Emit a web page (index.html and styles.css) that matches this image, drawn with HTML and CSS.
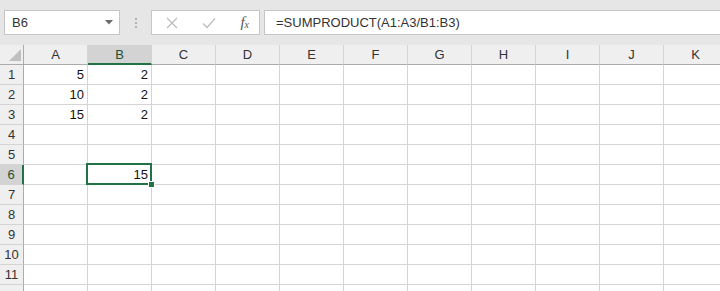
FILE: index.html
```html
<!DOCTYPE html>
<html lang="en">
<head>
    <meta charset="UTF-8">
    <title>SUMPRODUCT</title>
    <link rel="stylesheet" href="styles.css">
</head>
<body>
    <div class="toolbar">
        <div class="name-box">
            <span>B6</span>
            <svg class="caret" width="8" height="5" viewBox="0 0 8 5"><path d="M0 0H8L4 4.5Z" fill="#6b6b6b"/></svg>
        </div>
        <div class="grip">
            <i></i><i></i><i></i>
        </div>
        <div class="fn-buttons">
            <svg width="12" height="12" viewBox="0 0 12 12"><path d="M1 1L11 11M11 1L1 11" stroke="#bdbdbd" stroke-width="1.3" fill="none"/></svg>
            <svg width="14" height="12" viewBox="0 0 14 12"><path d="M1 6.5L5 10.5L13 1.5" stroke="#bdbdbd" stroke-width="1.3" fill="none"/></svg>
            <span class="fx">f<sub>x</sub></span>
        </div>
        <div class="formula">=SUMPRODUCT(A1:A3/B1:B3)</div>
    </div>

    <div class="sheet">
        <div class="corner"><svg width="12" height="12" viewBox="0 0 12 12"><path d="M12 0V12H0Z" fill="#bfbfbf"/></svg></div>
        <div class="col-head">A</div>
        <div class="col-head active">B</div>
        <div class="col-head">C</div>
        <div class="col-head">D</div>
        <div class="col-head">E</div>
        <div class="col-head">F</div>
        <div class="col-head">G</div>
        <div class="col-head">H</div>
        <div class="col-head">I</div>
        <div class="col-head">J</div>
        <div class="col-head">K</div>

        <div class="row-head">1</div><div class="cell">5</div><div class="cell">2</div><div class="cell"></div><div class="cell"></div><div class="cell"></div><div class="cell"></div><div class="cell"></div><div class="cell"></div><div class="cell"></div><div class="cell"></div><div class="cell"></div>
        <div class="row-head">2</div><div class="cell">10</div><div class="cell">2</div><div class="cell"></div><div class="cell"></div><div class="cell"></div><div class="cell"></div><div class="cell"></div><div class="cell"></div><div class="cell"></div><div class="cell"></div><div class="cell"></div>
        <div class="row-head">3</div><div class="cell">15</div><div class="cell">2</div><div class="cell"></div><div class="cell"></div><div class="cell"></div><div class="cell"></div><div class="cell"></div><div class="cell"></div><div class="cell"></div><div class="cell"></div><div class="cell"></div>
        <div class="row-head">4</div><div class="cell"></div><div class="cell"></div><div class="cell"></div><div class="cell"></div><div class="cell"></div><div class="cell"></div><div class="cell"></div><div class="cell"></div><div class="cell"></div><div class="cell"></div><div class="cell"></div>
        <div class="row-head">5</div><div class="cell"></div><div class="cell"></div><div class="cell"></div><div class="cell"></div><div class="cell"></div><div class="cell"></div><div class="cell"></div><div class="cell"></div><div class="cell"></div><div class="cell"></div><div class="cell"></div>
        <div class="row-head active">6</div><div class="cell"></div><div class="cell selected">15<span class="handle"></span></div><div class="cell"></div><div class="cell"></div><div class="cell"></div><div class="cell"></div><div class="cell"></div><div class="cell"></div><div class="cell"></div><div class="cell"></div><div class="cell"></div>
        <div class="row-head">7</div><div class="cell"></div><div class="cell"></div><div class="cell"></div><div class="cell"></div><div class="cell"></div><div class="cell"></div><div class="cell"></div><div class="cell"></div><div class="cell"></div><div class="cell"></div><div class="cell"></div>
        <div class="row-head">8</div><div class="cell"></div><div class="cell"></div><div class="cell"></div><div class="cell"></div><div class="cell"></div><div class="cell"></div><div class="cell"></div><div class="cell"></div><div class="cell"></div><div class="cell"></div><div class="cell"></div>
        <div class="row-head">9</div><div class="cell"></div><div class="cell"></div><div class="cell"></div><div class="cell"></div><div class="cell"></div><div class="cell"></div><div class="cell"></div><div class="cell"></div><div class="cell"></div><div class="cell"></div><div class="cell"></div>
        <div class="row-head">10</div><div class="cell"></div><div class="cell"></div><div class="cell"></div><div class="cell"></div><div class="cell"></div><div class="cell"></div><div class="cell"></div><div class="cell"></div><div class="cell"></div><div class="cell"></div><div class="cell"></div>
        <div class="row-head">11</div><div class="cell"></div><div class="cell"></div><div class="cell"></div><div class="cell"></div><div class="cell"></div><div class="cell"></div><div class="cell"></div><div class="cell"></div><div class="cell"></div><div class="cell"></div><div class="cell"></div>
        <div class="row-head"></div><div class="cell"></div><div class="cell"></div><div class="cell"></div><div class="cell"></div><div class="cell"></div><div class="cell"></div><div class="cell"></div><div class="cell"></div><div class="cell"></div><div class="cell"></div><div class="cell"></div>
    </div>
</body>
</html>
```

FILE: styles.css
```css
:root {
    --excel-green: #217346;
    --toolbar-bg: #e6e6e6;
    --header-bg: #efefef;
    --header-active: #d3d3d3;
    --grid-line: #d4d4d4;
    --header-line: #ababab;
}
body, html {
    margin: 0;
    overflow: hidden;
    background: #fff;
    font-family: 'Liberation Sans', Arial, sans-serif;
    color: #222;
}
.toolbar {
    display: flex;
    align-items: center;
    height: 45px;
    box-sizing: border-box;
    padding: 0 0 0 4px;
    background-color: var(--toolbar-bg);
}
.name-box {
    display: flex;
    align-items: center;
    justify-content: space-between;
    width: 116px;
    height: 25px;
    box-sizing: border-box;
    padding: 0 6px 0 7px;
    background: #fff;
    border: 1px solid #c6c6c6;
    font-size: 13px;
    color: #333;
}
.grip {
    display: flex;
    flex-direction: column;
    align-items: center;
    gap: 2px;
    width: 31px;
}
.grip i {
    width: 2px;
    height: 2px;
    background: #b0b0b0;
}
.fn-buttons {
    display: flex;
    align-items: center;
    justify-content: space-between;
    width: 109px;
    height: 25px;
    box-sizing: border-box;
    padding: 0 10px 0 14px;
    background: #fff;
    border: 1px solid #c6c6c6;
}
.fx {
    font-family: 'Liberation Serif', 'Times New Roman', serif;
    font-style: italic;
    font-size: 15px;
    color: #555;
}
.fx sub {
    font-size: 10px;
    vertical-align: -1px;
}
.formula {
    flex: 1;
    height: 25px;
    box-sizing: border-box;
    margin-left: 4px;
    padding: 4px 0 0 11px;
    background: #fff;
    border: 1px solid #c6c6c6;
    border-right: none;
    font-size: 13px;
    color: #333;
    white-space: nowrap;
}
.sheet {
    display: grid;
    grid-template-columns: 24px repeat(11, 64px);
    grid-auto-rows: 20px;
    font-size: 13px;
}
.corner,
.col-head,
.row-head {
    background-color: var(--header-bg);
    box-sizing: border-box;
    color: #333;
}
.corner {
    display: flex;
    align-items: flex-end;
    justify-content: flex-end;
    padding: 0 2px 3px 0;
    border-right: 1px solid var(--header-line);
    border-bottom: 1px solid var(--header-line);
}
.col-head {
    display: flex;
    align-items: center;
    justify-content: center;
    border-right: 1px solid var(--grid-line);
    border-bottom: 1px solid var(--header-line);
}
.col-head.active {
    background-color: var(--header-active);
    border-bottom: 2px solid var(--excel-green);
    color: #1f4f35;
}
.row-head {
    display: flex;
    align-items: center;
    justify-content: center;
    border-right: 1px solid var(--header-line);
    border-bottom: 1px solid var(--grid-line);
}
.row-head.active {
    background-color: var(--header-active);
    border-right: 2px solid var(--excel-green);
    color: #1f4f35;
}
.cell {
    display: flex;
    align-items: flex-end;
    justify-content: flex-end;
    box-sizing: border-box;
    padding: 0 3px 2px 0;
    border-right: 1px solid var(--grid-line);
    border-bottom: 1px solid var(--grid-line);
    color: #111;
}
.cell.selected {
    position: relative;
}
.cell.selected::before {
    content: "";
    position: absolute;
    left: -2px;
    top: -2px;
    right: -1px;
    bottom: -1px;
    border: 2px solid var(--excel-green);
}
.handle {
    position: absolute;
    right: -4px;
    bottom: -4px;
    width: 5px;
    height: 5px;
    background: var(--excel-green);
    border: 1px solid #fff;
    z-index: 1;
}
```
